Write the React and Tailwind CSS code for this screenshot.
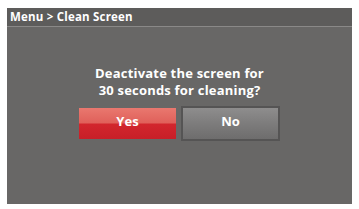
export default function App() {
  return (
    <div className="w-[359px] h-[209px] bg-white pt-[8px] pl-[7px]" style={{ fontFamily: '"Open Sans", "DejaVu Sans", sans-serif' }}>
      <div className="w-[345px] h-[196px] bg-[#686766] flex flex-col">
        <div className="h-[19px] bg-[#5d5c5b] border-b border-[#8a8988] flex items-center pl-[3px]">
          <span className="text-white font-bold text-[11.5px] leading-none tracking-[0.2px]">Menu &gt; Clean Screen</span>
        </div>
        <div className="flex flex-col items-center pt-[38px]">
          <div className="text-white font-bold text-[13px] leading-[17px] text-center tracking-[0.2px]">
            <div>Deactivate the screen for</div>
            <div>30 seconds for cleaning?</div>
          </div>
          <div className="flex gap-[5px] mt-[7px]">
            <div className="w-[97px] h-[31px] mt-[2px] pb-[3px] flex items-center justify-center text-white font-bold text-[13px] bg-[linear-gradient(to_bottom,#e9786f_0%,#e0605a_48%,#d2262d_52%,#c71f28_100%)]">
              Yes
            </div>
            <div className="w-[99px] h-[35px] pb-[3px] border-2 border-[#555454] flex items-center justify-center text-white font-bold text-[13px] bg-[linear-gradient(to_bottom,#8e8d8d_0%,#7d7c7c_50%,#6e6d6d_100%)]">
              No
            </div>
          </div>
        </div>
      </div>
    </div>
  );
}
